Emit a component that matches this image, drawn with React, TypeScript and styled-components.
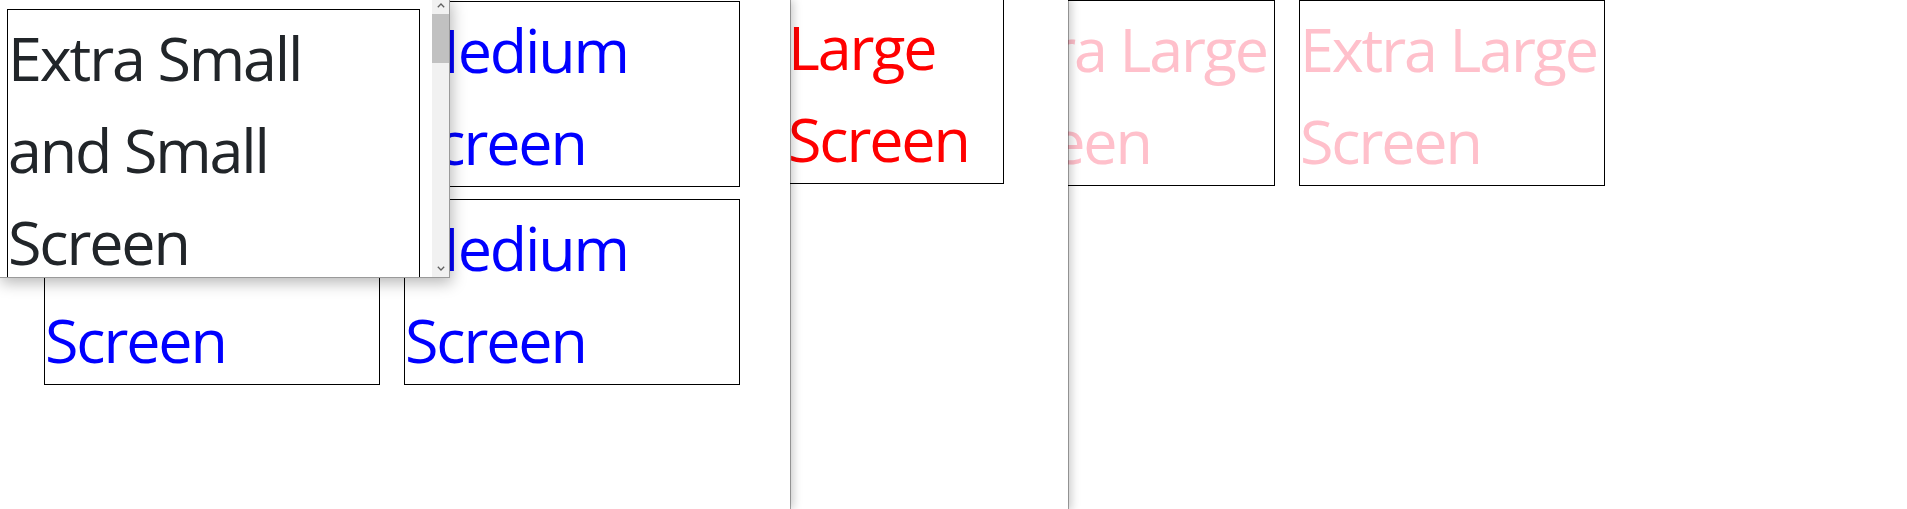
import React from "react";
import styled, { createGlobalStyle } from "styled-components";

const GlobalStyle = createGlobalStyle`
  html, body {
    margin: 0;
    padding: 0;
    background: #ffffff;
  }
  body {
    font-family: "Open Sans", "Noto Sans", sans-serif;
  }
`;

const Desktop = styled.main`
  position: relative;
  width: 1907px;
  height: 509px;
  overflow: hidden;
  background: #ffffff;
`;

const Window = styled.section<{
  $left: number;
  $top: number;
  $width: number;
  $height: number;
  $z: number;
}>`
  position: absolute;
  left: ${(p) => p.$left}px;
  top: ${(p) => p.$top}px;
  width: ${(p) => p.$width}px;
  height: ${(p) => p.$height}px;
  z-index: ${(p) => p.$z};
  background: #ffffff;
  overflow: hidden;
  box-shadow: 1px 0 0 rgba(0, 0, 0, 0.32), 3px 0 9px rgba(0, 0, 0, 0.22);
`;

const Grid = styled.div<{
  $cols: number;
  $colWidth: number;
  $colGap: number;
  $rowGap: number;
  $padLeft: number;
  $padTop: number;
}>`
  display: grid;
  grid-template-columns: repeat(${(p) => p.$cols}, ${(p) => p.$colWidth}px);
  column-gap: ${(p) => p.$colGap}px;
  row-gap: ${(p) => p.$rowGap}px;
  padding: ${(p) => p.$padTop}px 0 0 ${(p) => p.$padLeft}px;
  align-items: start;
`;

const ScreenBox = styled.div<{ $color: string; $lines: number }>`
  box-sizing: border-box;
  height: ${(p) => p.$lines * 92 + 2}px;
  overflow: hidden;
  border: 1px solid #000000;
  color: ${(p) => p.$color};
  font-family: "Open Sans", "Noto Sans", sans-serif;
  font-size: 61px;
  line-height: 92px;
  letter-spacing: -0.035em;
  padding: 2px 0 0 0;
  background: #ffffff;
`;

const Line = styled.span`
  display: block;
  white-space: nowrap;
`;

const Popup = styled.aside`
  position: absolute;
  left: -1px;
  top: -3px;
  width: 451px;
  height: 281px;
  z-index: 10;
  display: flex;
  box-sizing: border-box;
  background: #ffffff;
  border-right: 1px solid #9a9a9a;
  border-bottom: 1px solid #9a9a9a;
  box-shadow: 2px 5px 14px rgba(0, 0, 0, 0.28);
`;

const PopupViewport = styled.div`
  flex: 1;
  overflow: hidden;
  padding: 12px 12px 0 8px;
`;

const Scrollbar = styled.div`
  width: 17px;
  flex: none;
  display: flex;
  flex-direction: column;
  background: #f1f1f1;
`;

const ScrollButton = styled.div`
  height: 17px;
  flex: none;
  display: flex;
  align-items: center;
  justify-content: center;
`;

const ScrollTrack = styled.div`
  flex: 1;
  display: flex;
  flex-direction: column;
`;

const Thumb = styled.div`
  height: 49px;
  background: #c1c1c1;
`;

const Chevron = ({ up }: { up?: boolean }) => (
  <svg width="8" height="5" viewBox="0 0 8 5" aria-hidden="true">
    <polyline
      points={up ? "0.8,4.2 4,1 7.2,4.2" : "0.8,0.8 4,4 7.2,0.8"}
      fill="none"
      stroke="#606060"
      strokeWidth="1.3"
    />
  </svg>
);

const medium = [0, 1, 2, 3];

export default function App() {
  return (
    <>
      <GlobalStyle />
      <Desktop>
        <Window $left={944} $top={0} $width={963} $height={509} $z={1}>
          <Grid $cols={2} $colWidth={306} $colGap={24} $rowGap={12} $padLeft={25} $padTop={0}>
            <ScreenBox $color="#ffc0cb" $lines={2}>
              <Line>Extra Large</Line>
              <Line>Screen</Line>
            </ScreenBox>
            <ScreenBox $color="#ffc0cb" $lines={2}>
              <Line>Extra Large</Line>
              <Line>Screen</Line>
            </ScreenBox>
          </Grid>
        </Window>

        <Window $left={743} $top={-2} $width={325} $height={513} $z={2}>
          <Grid $cols={1} $colWidth={217} $colGap={0} $rowGap={12} $padLeft={44} $padTop={0}>
            <ScreenBox $color="#ff0000" $lines={2}>
              <Line>Large</Line>
              <Line>Screen</Line>
            </ScreenBox>
          </Grid>
        </Window>

        <Window $left={0} $top={0} $width={790} $height={509} $z={3}>
          <Grid $cols={2} $colWidth={336} $colGap={24} $rowGap={12} $padLeft={44} $padTop={1}>
            {medium.map((i) => (
              <ScreenBox key={i} $color="#0000ff" $lines={2}>
                <Line>Medium</Line>
                <Line>Screen</Line>
              </ScreenBox>
            ))}
          </Grid>
        </Window>

        <Popup>
          <PopupViewport>
            <ScreenBox $color="#212529" $lines={3}>
              <Line>Extra Small</Line>
              <Line>and Small</Line>
              <Line>Screen</Line>
            </ScreenBox>
          </PopupViewport>
          <Scrollbar>
            <ScrollButton>
              <Chevron up />
            </ScrollButton>
            <ScrollTrack>
              <Thumb />
            </ScrollTrack>
            <ScrollButton>
              <Chevron />
            </ScrollButton>
          </Scrollbar>
        </Popup>
      </Desktop>
    </>
  );
}
